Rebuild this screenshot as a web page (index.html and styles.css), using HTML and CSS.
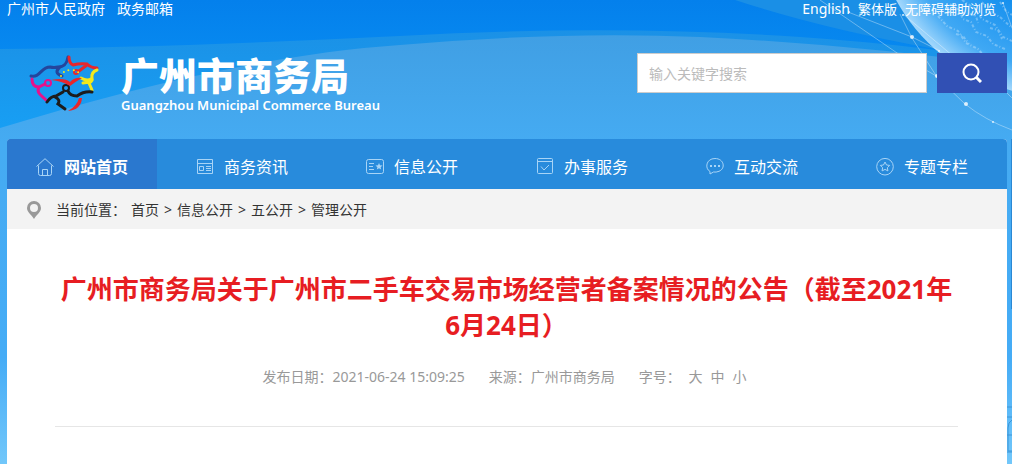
FILE: index.html
```html
<!DOCTYPE html>
<html lang="zh-CN">
  <head>
    <meta charset="utf-8">
    <title>广州市商务局</title>
    <link rel="stylesheet" href="styles.css">
  </head>
  <body>
    <svg class="sky" viewBox="0 0 1012 464" preserveAspectRatio="xMaxYMin slice" aria-hidden="true">
      <defs>
        <linearGradient id="base" x1="0" y1="0" x2="0" y2="1">
          <stop offset="0" stop-color="#0480ec"/>
          <stop offset=".3" stop-color="#0c98f6"/>
        </linearGradient>
        <linearGradient id="mid" x1="0" y1="0" x2="0" y2="1">
          <stop offset="0" stop-color="#1b91e6"/>
          <stop offset=".25" stop-color="#17a0f5"/>
        </linearGradient>
        <linearGradient id="front" x1="0" y1="0" x2="0" y2="1">
          <stop offset="0" stop-color="#409fe4"/>
          <stop offset=".25" stop-color="#45abf2"/>
          <stop offset=".75" stop-color="#45acf6"/>
          <stop offset="1" stop-color="#72c7fa"/>
        </linearGradient>
        <radialGradient id="globe" gradientUnits="userSpaceOnUse" cx="1060" cy="-90" r="187">
          <stop offset=".55" stop-color="#1690ee"/>
          <stop offset=".85" stop-color="#3fa8f4"/>
          <stop offset="1" stop-color="#a4d8fc"/>
        </radialGradient>
      </defs>
      <path fill="url(#base)" d="M0 0h1012v464H0z"/>
      <path fill="#1a8fe6" d="M735 0Q820 28 930 48L1012 60V0z"/>
      <path fill="url(#mid)" d="M0 49Q180 47 400 36Q610 24 800 37Q930 46 1012 62V464H0z"/>
      <path fill="url(#front)" d="M0 128C130 88 270 54 400 45Q560 31 700 37Q850 44 1012 66V464H0z"/>
      <circle fill="url(#globe)" cx="1060" cy="-90" r="187"/>
      <g class="land">
        <path d="M950 4l9 6 4 9 8 3 5 10 11 4 6 8 12 5M962 0l12 8 8 11 13 6 8 12 9 4M982 2l7 9 11 6 12 11M938 16l9 10 11 5 8 12 12 6 7 8M1000 2l6 9 6 4M970 14l6 2 2 7M990 28l8 2 4 9M956 34l7 2 6 8"/>
      </g>
      <g class="net">
        <path d="M820 0l80 55 38 22M848 12l64 25 28 14M900 14l12 24 25 39M937 77l28 27Q985 120 1012 130M903 14l50 42M1003 3l9 25M937 77l5-22M1007 93l5 5"/>
      </g>
      <g fill="#fff" opacity=".8">
        <circle cx="912" cy="37" r="2"/>
        <circle cx="903" cy="15" r="1"/>
        <circle cx="849" cy="12" r="1"/>
        <circle cx="939" cy="51" r="1"/>
        <circle cx="937" cy="76" r="2"/>
        <circle cx="966" cy="104" r="2"/>
        <circle cx="993" cy="122" r="1"/>
        <circle cx="1003" cy="3" r="1"/>
      </g>
      <path fill="#2a88d4" d="M1011 139h1v170h-1z"/>
      <path class="city" d="M1007 407h5M1007 417h5M1012 420q-4 2-4 8v23h4M1007 435h5M1007 452h5"/>
    </svg>

    <header>
      <div class="topbar">
        <nav class="links" aria-label="政府网站">
          <a href="#">广州市人民政府</a>
          <a href="#">政务邮箱</a>
        </nav>
        <nav class="tools" aria-label="语言">
          <a class="en" href="#">English</a>
          <a href="#">繁体版</a>
          <a href="#">无障碍辅助浏览</a>
        </nav>
      </div>
      <div class="banner">
        <a class="brand" href="#">
          <svg class="logo" width="74" height="60" viewBox="0 0 74 60" aria-hidden="true">
            <path stroke="#24459c" d="M4 23C13 25 14 14 23 14Q27 15 31 14C38 14 40 10 41 4M33 14Q26 20 35 23"/>
            <path stroke="#e8262b" d="M42 4Q42 10 46 12Q53 10 60 11Q64 15 70 15M60 12L52 18"/>
            <circle stroke="#e8262b" cx="49" cy="19" r="2"/>
            <path stroke="#f3e91c" d="M70 17Q64 19 65 25Q61 29 54 25M65 25Q66 28 62 30L65 37M56 30L63 29"/>
            <path stroke="#e5128c" d="M5 26C5 32 8 34 12 34L18 31M12 34C9 40 14 42 19 47"/>
            <circle stroke="#e5128c" cx="21" cy="30" r="3"/>
            <path stroke="#1c1c1c" d="M20 49Q24 43 29 43L36 39M41 38Q43 43 50 43Q57 38 65 39M28 44Q34 47 31 51L38 56"/>
            <circle stroke="#1c1c1c" cx="39" cy="35" r="3"/>
            <path fill="#e8262b" d="M24 27Q38 24 43 29Q48 24 55 25Q48 29 43 33Q35 28 24 27z"/>
            <path fill="#e8262b" d="M52 45h3Q54 57 41 58Q50 53 52 45z"/>
            <path class="dots" d="M34 23Q36 17 44 17Q51 17 54 23"/>
          </svg>
          <span class="name">
            <strong>广州市商务局</strong>
            <span>Guangzhou Municipal Commerce Bureau</span>
          </span>
        </a>
        <form class="search">
          <input type="text" name="keywords" aria-label="搜索" placeholder="输入关键字搜索">
          <button type="submit" aria-label="搜索">
            <svg width="20" height="20" viewBox="0 0 20 20">
              <circle cx="9" cy="9" r="7.500"/>
              <path stroke-width="3" d="M14 14l5 5"/>
            </svg>
          </button>
        </form>
      </div>
    </header>

    <main>
      <nav class="menu" aria-label="主导航">
        <a class="active" href="#">
          <svg viewBox="0 0 18 18"><path d="M.500 8.500L9 .700l8.500 7.800M2.500 7.500v8q0 2 2 2h9q2 0 2-2v-8M6.500 17.500v-6h5v6"/></svg>
          网站首页
        </a>
        <a href="#">
          <svg viewBox="0 0 18 18"><path d="M1.500 1.500h15v14h-15zM1.500 5.500h15M3.500 8.500h4v4h-4zM10 8.500h5M10 10.500h5M10 12.500h5"/></svg>
          商务资讯
        </a>
        <a href="#">
          <svg viewBox="0 0 18 18"><rect x=".5" y="1.500" width="17" height="14" rx="2"/><path d="M3 5.500h5M3 8.500h4M3 11.500h5"/><path class="solid" d="M13 5l1 2.300 2.500.2-1.900 1.700.6 2.400-2.200-1.300-2.200 1.300.6-2.400-1.900-1.700 2.500-.2z"/></svg>
          信息公开
        </a>
        <a href="#">
          <svg viewBox="0 0 18 18"><rect x="1.500" y=".5" width="15" height="15" rx="1"/><path d="M1.500 3.500h15M5 8.500l3 3.500 5-5"/></svg>
          办事服务
        </a>
        <a href="#">
          <svg viewBox="0 0 18 18"><path d="M4 13.500C-1.500 10.500 0 .500 9 .500s11 10 4 12.800Q10 14.500 7.500 14L4 16z"/><path class="solid" d="M4 7h2v2H4zM8 7h2v2H8zM12 7h2v2h-2z"/></svg>
          互动交流
        </a>
        <a href="#">
          <svg viewBox="0 0 18 18"><circle cx="9" cy="8.700" r="8.300"/><path d="M9 4l1.500 3 3.200.4-2.300 2.300.5 3.200L9 11.400l-2.900 1.500.5-3.200-2.300-2.300L7.500 7z"/></svg>
          专题专栏
        </a>
      </nav>

      <nav class="crumbs" aria-label="当前位置">
        <svg width="14" height="18" viewBox="0 0 14 18"><path d="M7 0a7 7 0 0 1 7 7c0 4-4 6-7 11C4 13 0 11 0 7a7 7 0 0 1 7-7zm0 3a4 4 0 1 0 0 8 4 4 0 0 0 0-8z"/></svg>
        <p>
          <span>当前位置：</span>
          <a href="#">首页</a> <span>&gt;</span>
          <a href="#">信息公开</a> <span>&gt;</span>
          <a href="#">五公开</a> <span>&gt;</span>
          <a href="#">管理公开</a>
        </p>
      </nav>

      <article>
        <h1>广州市商务局关于广州市二手车交易市场经营者备案情况的公告（截至2021年6月24日）</h1>
        <div class="meta">
          <span>发布日期：2021-06-24 15:09:25</span>
          <span>来源：广州市商务局</span>
          <span class="size">字号： <button type="button">大</button><button type="button">中</button><button type="button">小</button></span>
        </div>
      </article>
    </main>
  </body>
</html>
```
FILE: styles.css
```css
* {
  box-sizing: border-box;
}

body {
  display: flex;
  flex-direction: column;
  min-height: 100vh;
  margin: 0;
  padding: 0 5px 0 7px;
  background: #45acf6;
  font: 14px/20px "Noto Sans", "Noto Sans CJK SC", sans-serif;
  color: #333;
}

a {
  color: inherit;
  text-decoration: none;
}

button,
input {
  font: inherit;
}

/* backdrop */
.sky {
  position: absolute;
  top: 0;
  left: 0;
  z-index: -1;
  width: 100%;
  height: 464px;
}

.land,
.net {
  fill: none;
  stroke: #fff;
}

.land {
  stroke-width: 2;
  stroke-dasharray: 3 2 1 2;
  opacity: .3;
}

.net {
  opacity: .35;
}

.city {
  fill: none;
  stroke: #3c96d8;
}

/* header */
.topbar {
  display: flex;
  justify-content: space-between;
  padding-right: 11px;
  line-height: 18px;
  color: #fff;
}

.links {
  display: flex;
  gap: 12px;
}

.tools {
  display: flex;
  gap: 8px;
  font-size: 13px;
}

.en {
  font-size: 14px;
}

.banner {
  display: flex;
  justify-content: space-between;
  align-items: flex-start;
  height: 121px;
  padding-top: 35px;
}

.brand {
  display: flex;
  gap: 20px;
  padding-left: 20px;
  color: #fff;
}

.logo {
  fill: none;
  stroke-width: 3;
  stroke-linecap: round;
}

.logo circle {
  stroke-width: 2;
}

.dots {
  stroke: #f3e91c;
  stroke-width: 2;
  stroke-dasharray: 0 5;
}

.name {
  display: flex;
  flex-direction: column;
  font-weight: 600;
}

.name strong {
  font-size: 38px;
  font-weight: 900;
  line-height: 44px;
}

.name span {
  font-size: 13px;
  line-height: 16px;
}

.search {
  display: flex;
  gap: 10px;
}

.search input {
  width: 290px;
  height: 40px;
  padding: 0 11px;
  border: 1px solid #ccc;
  background: #fff;
}

.search input::placeholder {
  color: #bbb;
}

.search button {
  width: 70px;
  height: 40px;
  padding: 0;
  border: 0;
  background: #3150b4;
}

.search svg {
  display: block;
  margin: auto;
  fill: none;
  stroke: #fff;
  stroke-width: 2;
}

/* main menu */
main {
  flex: 1;
  background: #fff;
  border-radius: 4px 4px 0 0;
}

.menu {
  display: flex;
  height: 50px;
  overflow: hidden;
  border-radius: 4px 4px 0 0;
  background: #288bdc;
  color: #fff;
  font-size: 16px;
}

.menu a {
  display: flex;
  flex: 1;
  justify-content: center;
  align-items: center;
  gap: 10px;
  padding-top: 6px;
}

.menu .active {
  flex: 0 0 15%;
  background: #2a78cf;
  font-weight: bold;
}

.menu svg {
  width: 18px;
  height: 18px;
  fill: none;
  stroke: #a8d4f6;
}

.menu .solid {
  fill: #a8d4f6;
  stroke: none;
}

.crumbs {
  display: flex;
  align-items: center;
  gap: 15px;
  height: 40px;
  padding: 1px 0 0 20px;
  background: #f3f3f3;
}

.crumbs svg {
  fill: #999;
}

.crumbs p {
  display: flex;
  gap: 5px;
  margin: 0;
}

/* article */
article {
  margin: 0 49px 0 48px;
  padding: 42px 0 39px;
  border-bottom: 1px solid #e6e6e6;
  text-align: center;
}

h1 {
  margin: 0 0 24px;
  color: #e71d22;
  font-size: 26px;
  line-height: 36px;
}

.meta {
  display: flex;
  justify-content: center;
  gap: 24px;
  color: #999;
}

.size button {
  margin: 0 4px;
  padding: 0;
  border: 0;
  background: none;
  color: inherit;
}
```
